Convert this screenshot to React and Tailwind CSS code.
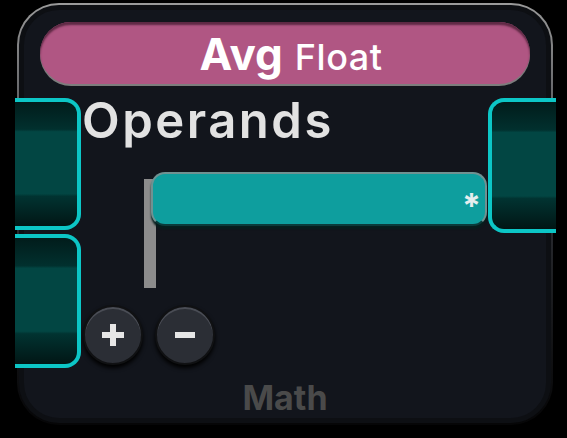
export default function App() {
    return (
        <div className="relative h-[438px] w-[567px] overflow-hidden bg-black font-['Inter',sans-serif]">
            {/* node card */}
            <div className="ml-[17px] pt-[3px]">
                <div className="h-[422px] w-[536px] rounded-[42px] bg-gradient-to-b from-[#9a9a9a] via-[#2a2c31] to-[#060607] p-[2px]">
                    <div className="flex h-full flex-col rounded-[40px] border-[5px] border-[#0d0f13] bg-[#12151c] px-[16px] pt-[12px]">
                        {/* header */}
                        <div className="flex h-[62px] items-baseline justify-center gap-[12px] rounded-[31px] bg-[#b05683] pl-[12px] pt-[4px] shadow-[inset_0_3px_2px_#5e2944,0_2px_0_#7d7d7d]">
                            <span className="text-[44px] leading-[56px] font-bold text-white">
                                Avg
                            </span>
                            <span className="text-[36px] leading-[56px] font-medium tracking-[0.5px] text-white">
                                Float
                            </span>
                        </div>

                        {/* title */}
                        <div className="ml-[42px] mt-[12px] text-[49px] leading-none font-semibold tracking-[2.5px] text-[#e2e2e2]">
                            Operands
                        </div>

                        {/* operand list */}
                        <div className="ml-[104px] mt-[27px] flex items-start">
                            <div className="mt-[7px] h-[109px] w-[12px] bg-[#8c8c8c]" />
                            <div className="-ml-[5px] flex h-[54px] w-[336px] items-center justify-end rounded-[14px] border-2 border-[#6f9292] border-b-[#0b3a3a] bg-[#0e9e9e] pr-[4px] shadow-[0_3px_2px_#071d1d]">
                                <span className="mt-[14px] text-[34px] leading-none font-bold text-[#e4eeee]">
                                    *
                                </span>
                            </div>
                        </div>

                        {/* add / remove */}
                        <div className="ml-[43px] mt-[17px] flex gap-[12px]">
                            <button className="flex h-[60px] w-[60px] items-center justify-center rounded-full border-2 border-[#101113] bg-[#2b2e35] shadow-[inset_0_2px_0_#4a4d55,0_3px_4px_#000]">
                                <span className="relative block h-[22px] w-[22px]">
                                    <span className="absolute left-0 top-[8px] h-[6px] w-[22px] bg-[#e6e6e6]" />
                                    <span className="absolute left-[8px] top-0 h-[22px] w-[6px] bg-[#e6e6e6]" />
                                </span>
                            </button>
                            <button className="flex h-[60px] w-[60px] items-center justify-center rounded-full border-2 border-[#101113] bg-[#2b2e35] shadow-[inset_0_2px_0_#4a4d55,0_3px_4px_#000]">
                                <span className="block h-[6px] w-[20px] bg-[#e6e6e6]" />
                            </button>
                        </div>

                        {/* category */}
                        <div className="mt-[16px] text-center text-[34px] leading-none font-bold text-[#4a4a4a]">
                            Math
                        </div>
                    </div>
                </div>
            </div>

            {/* input sockets */}
            <div className="absolute left-[15px] top-[98px] h-[132px] w-[66px] rounded-r-[16px] border-[4px] border-l-0 border-[#0cc6c6] bg-[linear-gradient(to_bottom,#011c1b_0%,#01302e_22%,#024643_24%,#024643_74%,#013331_76%,#011615_100%)]" />
            <div className="absolute left-[15px] top-[234px] h-[134px] w-[66px] rounded-r-[16px] border-[4px] border-l-0 border-[#0cc6c6] bg-[linear-gradient(to_bottom,#011c1b_0%,#01302e_22%,#024643_24%,#024643_74%,#013331_76%,#011615_100%)]" />

            {/* output socket */}
            <div className="absolute left-[488px] top-[98px] h-[135px] w-[68px] rounded-l-[16px] border-[4px] border-r-0 border-[#0cc6c6] bg-[linear-gradient(to_bottom,#011c1b_0%,#01302e_22%,#024643_24%,#024643_74%,#013331_76%,#011615_100%)]" />
        </div>
    )
}
